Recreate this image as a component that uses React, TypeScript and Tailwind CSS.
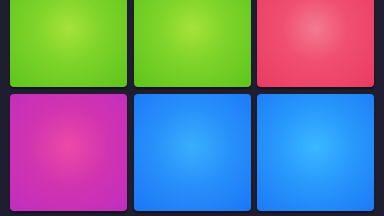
const pads = [
  'bg-[radial-gradient(circle_at_50%_50%,#a6e23a_0%,#7fd42a_40%,#5ec41c_100%)]',
  'bg-[radial-gradient(circle_at_50%_50%,#a6e23a_0%,#7fd42a_40%,#5ec41c_100%)]',
  'bg-[radial-gradient(circle_at_50%_50%,#f27a90_0%,#f04f72_40%,#ea3b62_100%)]',
  'bg-[radial-gradient(circle_at_50%_45%,#ec4aa6_0%,#d234b0_45%,#bf2dbf_100%)]',
  'bg-[radial-gradient(circle_at_50%_45%,#3aaefc_0%,#2790fb_45%,#1c76f6_100%)]',
  'bg-[radial-gradient(circle_at_50%_45%,#3ab8ff_0%,#2898fc_45%,#1c7af6_100%)]',
]

export default function App() {
  return (
    <div className="w-[384px] h-[216px] overflow-hidden bg-[#1f1d30]">
      <div className="grid grid-cols-[117px_117px_117px] gap-x-[6.5px] gap-y-[7px] px-[10px] -mt-[30px]">
        {pads.map((c, i) => (
          <div
            key={i}
            className={`h-[117px] rounded-[4px] shadow-[0_2px_2px_rgba(0,0,0,0.45)] ${c}`}
          />
        ))}
      </div>
    </div>
  )
}
